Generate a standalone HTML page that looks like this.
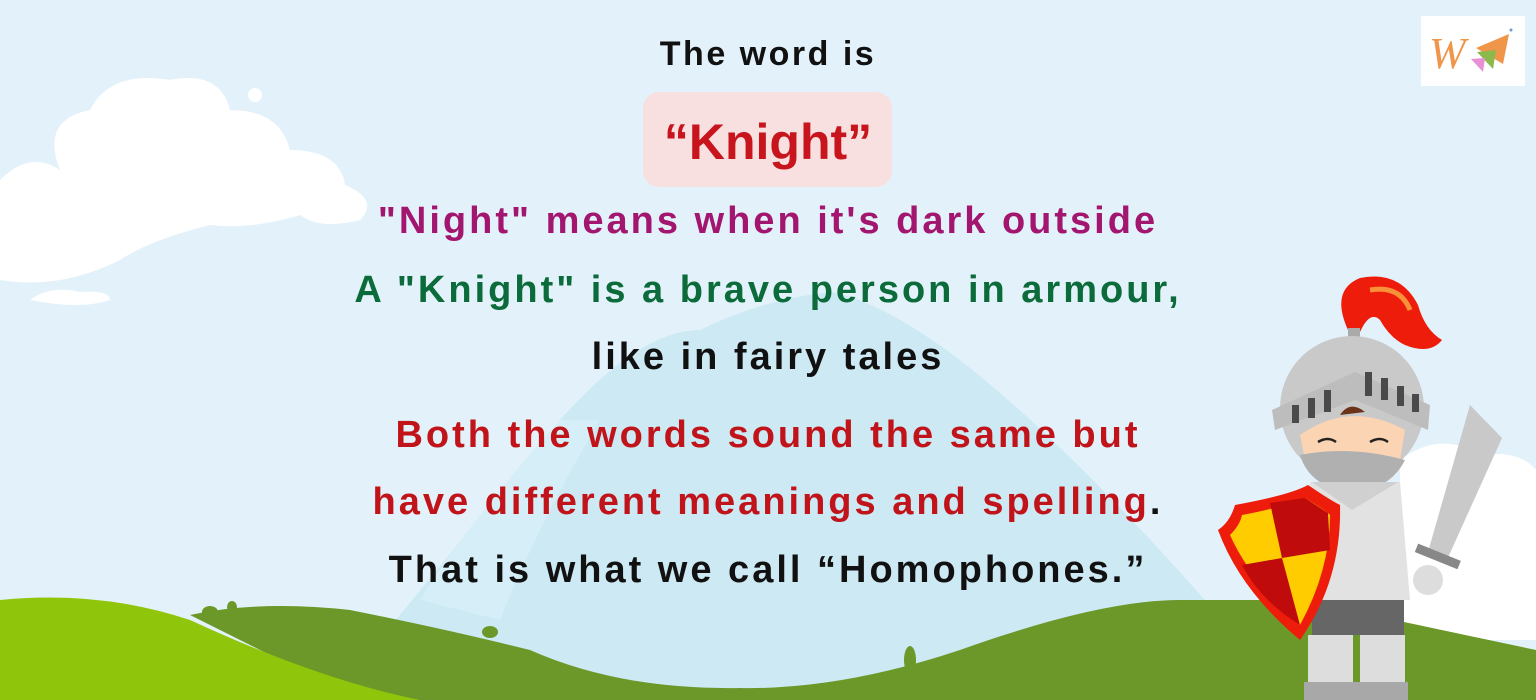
<!DOCTYPE html>
<html><head><meta charset="utf-8"><style>
html,body{margin:0;padding:0}
body{width:1536px;height:700px;overflow:hidden;background:#e3f2fa;position:relative;font-family:"Liberation Sans",sans-serif}
svg.bg{position:absolute;left:0;top:0}
.t{position:absolute;left:0;width:1536px;text-align:center;font-weight:bold;white-space:nowrap;font-size:38px;letter-spacing:3px}
.box{position:absolute;left:643px;top:92px;width:249px;height:95px;background:#f8dfe0;border-radius:16px}
</style></head><body>
<svg class="bg" width="1536" height="700" viewBox="0 0 1536 700">
<path d="M330 700 L560 420 Q640 330 700 330 Q760 300 830 292 Q880 300 960 360 Q1100 470 1290 700Z" fill="#cde9f4"/>
<path d="M420 600 Q470 520 560 420 L600 420 Q540 520 500 620Z" fill="#d6eef7"/>
<g fill="#fff">
<path d="M0 280 L0 180 Q30 150 60 170 Q40 120 90 110 Q110 70 170 80 Q220 70 230 110 Q280 110 290 150 Q340 150 345 185 Q380 200 360 220 Q320 230 300 215 Q250 230 210 225 Q150 240 120 260 Q60 290 0 280Z"/>
<path d="M30 300 Q50 285 80 292 Q110 290 110 300 Q80 310 30 300Z"/>
<circle cx="255" cy="95" r="7"/>
<path d="M1400 460 Q1440 430 1480 455 Q1520 450 1536 470 L1536 640 L1400 640Z"/>
</g>
<path d="M190 615 Q260 600 350 610 Q450 630 530 650 Q620 690 740 688 Q840 690 960 650 Q1100 600 1180 600 L1300 600 L1536 650 L1536 700 L360 700 Q280 660 190 615Z" fill="#6b9828"/>
<path d="M0 600 Q100 590 190 620 Q320 680 420 700 L0 700Z" fill="#8fc50a"/>
<g fill="#6b9828"><ellipse cx="210" cy="612" rx="8" ry="6"/><ellipse cx="232" cy="607" rx="5" ry="6"/><ellipse cx="910" cy="660" rx="6" ry="14"/><ellipse cx="490" cy="632" rx="8" ry="6"/><ellipse cx="1510" cy="660" rx="14" ry="12"/></g>
</svg>

<div class="t" style="top:35px;font-size:34px;letter-spacing:2.5px;color:#111">The word is</div>
<div class="box"></div>
<div class="t" style="top:113px;font-size:50px;color:#c8141c;letter-spacing:0">“Knight”</div>
<div class="t" style="top:200px;color:#a3166f">"Night" means when it's dark outside</div>
<div class="t" style="top:269px;color:#0c6b3b">A "Knight" is a brave person in armour,</div>
<div class="t" style="top:336px;color:#111">like in fairy tales</div>
<div class="t" style="top:414px;color:#c0141a">Both the words sound the same but</div>
<div class="t" style="top:481px;color:#c0141a">have different meanings and spelling<span style="color:#111">.</span></div>
<div class="t" style="top:549px;color:#111">That is what we call “Homophones.”</div>

<div style="position:absolute;left:1421px;top:16px;width:104px;height:70px;background:#fff"></div>
<svg style="position:absolute;left:1421px;top:16px" width="104" height="70" viewBox="0 0 104 70">
<text x="8" y="52" font-family="Liberation Serif" font-style="italic" font-size="44" fill="#f0964a">W</text>
<path d="M55 32 L88 18 L82 48Z" fill="#f0964a"/>
<path d="M56 36 L75 34 L72 53Z" fill="#8cba4a"/>
<path d="M50 43 L64 42 L62 56Z" fill="#e98fd6"/>
<circle cx="90" cy="14" r="1.5" fill="#6a9ad0"/>
</svg>

<svg style="position:absolute;left:1200px;top:260px" width="336" height="440" viewBox="0 0 336 440">
<path d="M148 70 Q130 30 160 18 Q200 10 218 45 Q225 70 242 80 Q230 95 205 85 Q190 78 180 60 Q170 50 160 72Z" fill="#ee1c0a"/>
<path d="M170 30 Q200 25 210 50" stroke="#f8913a" stroke-width="5" fill="none"/>
<rect x="148" y="68" width="12" height="14" fill="#aaa"/>
<circle cx="152" cy="148" r="72" fill="#c9c9c9"/>
<path d="M72 150 L155 112 L230 145 L228 170 L155 140 L75 170Z" fill="#bdbdbd"/>
<g fill="#4a4a4a"><rect x="92" y="145" width="7" height="18"/><rect x="108" y="138" width="7" height="20"/><rect x="124" y="130" width="7" height="22"/><rect x="165" y="112" width="7" height="24"/><rect x="181" y="118" width="7" height="22"/><rect x="197" y="126" width="7" height="20"/><rect x="212" y="134" width="7" height="18"/></g>
<path d="M100 175 Q150 140 205 170 L200 200 Q150 190 105 200Z" fill="#fbd4b4"/>
<path d="M140 155 Q150 140 165 152" fill="#6b3317"/>
<path d="M118 182 Q128 176 136 182 M170 182 Q180 176 188 182" stroke="#222" stroke-width="2.5" fill="none"/>
<path d="M100 195 Q150 185 205 200 Q190 230 152 232 Q110 228 100 195Z" fill="#b0b0b0"/>
<path d="M270 145 L302 178 L246 302 L228 292Z" fill="#c9c9c9"/>
<rect x="215" y="292" width="46" height="9" fill="#888" transform="rotate(22 238 296)"/>
<circle cx="228" cy="320" r="15" fill="#ddd"/>
<path d="M110 222 L200 222 L210 340 L115 340Z" fill="#e2e2e2"/>
<path d="M112 222 L198 222 L152 250Z" fill="#d0d0d0"/>
<rect x="112" y="340" width="92" height="35" fill="#666"/>
<rect x="108" y="375" width="45" height="65" fill="#ddd"/><rect x="160" y="375" width="45" height="65" fill="#ddd"/>
<rect x="104" y="422" width="52" height="18" fill="#a8a8a8"/><rect x="156" y="422" width="52" height="18" fill="#a8a8a8"/>
<path d="M18 270 Q30 262 35 245 Q90 235 108 225 Q130 240 140 245 Q142 320 100 380 Q40 330 18 270Z" fill="#ee1c0a"/>
<path d="M30 275 Q40 265 42 255 Q80 248 105 238 Q128 252 130 255 Q130 310 100 365 Q50 320 30 275Z" fill="#ffcc00"/>
<path d="M70 243 L105 238 L128 253 L130 290 L82 298Z M82 298 L42 305 Q60 340 100 365 L100 365Z" fill="#bf0b0b"/>
</svg>
</body></html>
